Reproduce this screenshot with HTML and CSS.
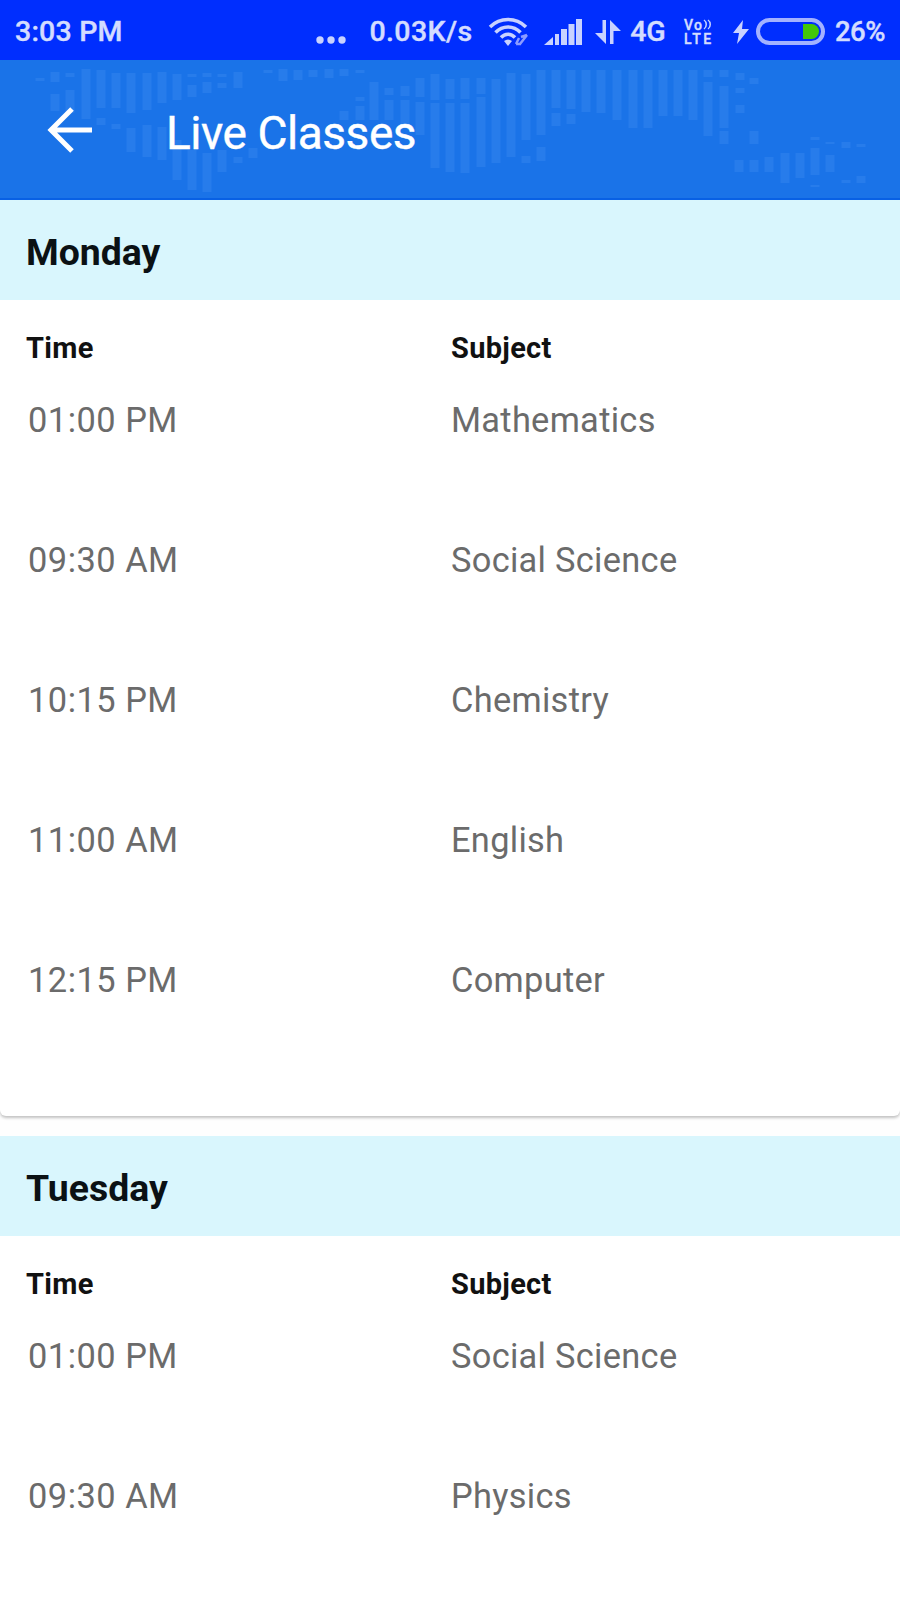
FILE: index.html
```html
<!DOCTYPE html>
<html lang="en">
<head>
    <meta charset="UTF-8">
    <meta name="viewport" content="width=device-width, initial-scale=1.0">
    <title>Live Classes</title>
    <link rel="stylesheet" href="styles.css">
</head>
<body>
    <div class="status-bar">
        <span class="clock">3:03 PM</span>
        <svg class="dots" width="32" height="10" viewBox="0 0 32 10">
            <circle cx="5" cy="5" r="3.7"/>
            <circle cx="16" cy="5" r="3.7"/>
            <circle cx="27" cy="5" r="3.7"/>
        </svg>
        <span class="speed">0.03K/s</span>
        <svg class="wifi" width="42" height="30" viewBox="0 0 42 30">
            <path d="M2 10C12 0 28 0 38 10M7.500 15.500C14.500 8 25.500 8 32.500 15.500M13 20.500C17 16 23 16 27 20.500"/>
            <path class="solid" d="M16 24Q20 21 24 24L20 29z"/>
            <path class="thin" d="M28 27l3-6M32 27l7-9M33 20l6-2M28 27h5"/>
        </svg>
        <svg class="signal" width="38" height="26" viewBox="0 0 38 26">
            <path d="M0 26L9 18V26zM11 15h4v11h-4zM17 10h6v16h-6zM24.500 5h6v21h-6zM32 0h6v26h-6z"/>
        </svg>
        <svg class="arrows" width="26" height="26" viewBox="0 0 26 26">
            <path d="M7.500 1H11V25L0 14H7.500zM15 25V1L26 12H18.500V25z"/>
        </svg>
        <span class="network">4G</span>
        <div class="volte">
            <span>Vo<svg width="9" height="11" viewBox="0 0 9 11"><path d="M1 1C4 3 4 8 1 10M5 1C8 3 8 8 5 10"/></svg></span>
            <span class="lte">LTE</span>
        </div>
        <svg class="bolt" width="16" height="24" viewBox="0 0 16 24">
            <path d="M10 0L0 13H6L4 24L16 9H9z"/>
        </svg>
        <div class="battery"><div class="battery-level"></div></div>
        <span class="percent">26%</span>
    </div>
    <header class="app-bar">
        <!-- Dotted world map behind the title -->
        <svg class="map" viewBox="0 60 900 140">
            <path d="M40 78V81M55 72V82M55 94V111M70 73V77M70 90V113M86 69V119M101 70V108M101 118V125M116 73V108M116 124V129M131 73V113M131 128V152M147 73V110M147 125V157M162 72V103M162 127V160M177 74V100M177 140V180M192 74V77M192 85V97M192 150V190M207 73V77M207 82V93M207 153V192M222 74V77M222 83V88M222 150V172M238 72V88M238 157V163M253 148V158M268 70V73M283 69V81M298 70V80"/>
            <path d="M313 70V77M329 69V78M344 69V76M360 70V73M344 111V120M360 97V101M360 106V120M374 82V120M389 88V95M389 100V120M405 86V96M405 100V125M420 78V97M420 102V135M435 74V100M435 103V168M450 79V99M450 103V172M465 78V99M465 103V173M481 78V94M481 97V167M496 79V163M511 73V157M526 74V140M526 156V163M541 70V135M541 147V161M556 70V108M556 113V126M571 70V109M571 114V124M586 70V112M601 70V113"/>
            <path d="M617 70V120M633 70V128M648 70V128M663 70V116M678 70V116M693 70V120M708 70V77M708 82V136M724 70V77M724 86V128M724 131V144M740 73V80M740 88V93M740 105V113M754 78V84M754 131V144M739 160V172M754 160V172M769 157V172M785 153V183M800 153V178M815 137V140M815 148V175M815 185V187M830 142V144M830 155V172M846 142V148M846 180V183M861 144V147M861 176V183"/>
        </svg>
        <svg class="back" width="48" height="48" viewBox="0 0 48 48">
            <path d="M26 3L5 24L26 45M5 24H46"/>
        </svg>
        <h1>Live Classes</h1>
    </header>
    <main>
        <section class="card">
            <h2>Monday</h2>
            <div class="row head"><span>Time</span><span>Subject</span></div>
            <div class="row"><span class="time">01:00 PM</span><span>Mathematics</span></div>
            <div class="row"><span class="time">09:30 AM</span><span>Social Science</span></div>
            <div class="row"><span class="time">10:15 PM</span><span>Chemistry</span></div>
            <div class="row"><span class="time">11:00 AM</span><span>English</span></div>
            <div class="row"><span class="time">12:15 PM</span><span>Computer</span></div>
        </section>
        <section class="card">
            <h2>Tuesday</h2>
            <div class="row head"><span>Time</span><span>Subject</span></div>
            <div class="row"><span class="time">01:00 PM</span><span>Social Science</span></div>
            <div class="row"><span class="time">09:30 AM</span><span>Physics</span></div>
        </section>
    </main>
</body>
</html>
```
FILE: styles.css
```css
* {
    box-sizing: border-box;
}
body {
    font-family: Roboto, sans-serif;
    margin: 0;
    background-color: #fefefe;
}
.status-bar {
    display: flex;
    align-items: center;
    height: 60px;
    padding: 3px 15px 0 15px;
    background-color: #002efe;
    color: #d3dcff;
    font-size: 28.5px;
    font-weight: 500;
    white-space: nowrap;
    -webkit-text-stroke: 0.4px;
}
.status-bar svg {
    flex: none;
    fill: #c8d2ff;
}
.clock {
    width: 301px;
    letter-spacing: 0.2px;
}
.dots {
    margin-top: 16px;
}
.speed {
    width: 119px;
    margin-left: 22px;
    letter-spacing: 0.4px;
}
.wifi path {
    fill: none;
    stroke: #c8d2ff;
    stroke-width: 3.5;
}
.wifi .solid {
    fill: #c8d2ff;
    stroke: none;
}
.wifi .thin {
    stroke: #8c9cff;
    stroke-width: 2.5;
}
.signal {
    margin-left: 14px;
}
.arrows {
    margin-left: 13px;
}
.network {
    width: 54px;
    margin-left: 9px;
}
.volte {
    display: flex;
    flex-direction: column;
    width: 32px;
    font-size: 14px;
    font-weight: 500;
    line-height: 14px;
    letter-spacing: 1.2px;
}
.volte .lte {
    letter-spacing: 2.4px;
}
.volte path {
    fill: none;
    stroke: #c8d2ff;
    stroke-width: 1.5;
}
.bolt {
    margin-left: 17px;
}
.battery {
    display: flex;
    flex: none;
    justify-content: flex-end;
    width: 69px;
    height: 27px;
    margin-left: 7px;
    padding: 2px;
    border: 4px solid #a3b2ff;
    border-radius: 14px;
}
.battery-level {
    width: 16px;
    background-color: #43c80a;
    border-radius: 0 8px 8px 0;
}
.percent {
    margin-left: 10px;
    font-size: 27.5px;
    letter-spacing: -0.5px;
}
.app-bar {
    position: relative;
    display: flex;
    align-items: center;
    height: 140px;
    padding: 2px 0 0 46px;
    background-color: #1a73e8;
    border-bottom: 2px solid #0860e4;
}
.map {
    position: absolute;
    left: 0;
    top: 0;
    width: 900px;
    height: 140px;
    fill: none;
    stroke: #277ceb;
    stroke-width: 9;
}
.back {
    position: relative;
    fill: none;
    stroke: #fff;
    stroke-width: 5;
}
h1 {
    position: relative;
    margin: 5px 0 0 72px;
    color: #fff;
    font-size: 46px;
    font-weight: 400;
    letter-spacing: -0.45px;
    -webkit-text-stroke: 0.4px;
}
.card {
    height: 916px;
    margin-bottom: 20px;
    background-color: #fff;
    border-radius: 0 0 6px 6px;
    box-shadow: 0 2px 3px rgba(0, 0, 0, 0.24);
}
.card:last-child {
    height: 464px;
    margin-bottom: 0;
    overflow: hidden;
    border-radius: 0;
    box-shadow: none;
}
h2 {
    height: 100px;
    margin: 0;
    padding-left: 26px;
    background-color: #d9f6fd;
    color: #0b1114;
    font-size: 37.4px;
    font-weight: 700;
    line-height: 105px;
}
.row {
    display: grid;
    grid-template-columns: 423px 1fr;
    height: 140px;
    padding-left: 28px;
    color: #6b6b6b;
    font-size: 34.4px;
    line-height: 40px;
    letter-spacing: 0.3px;
}
.time {
    letter-spacing: 0.5px;
}
.row.head {
    grid-template-columns: 425px 1fr;
    height: 100px;
    padding: 28px 0 0 26px;
    color: #111;
    font-size: 29px;
    font-weight: 700;
    line-height: 40px;
}
```
